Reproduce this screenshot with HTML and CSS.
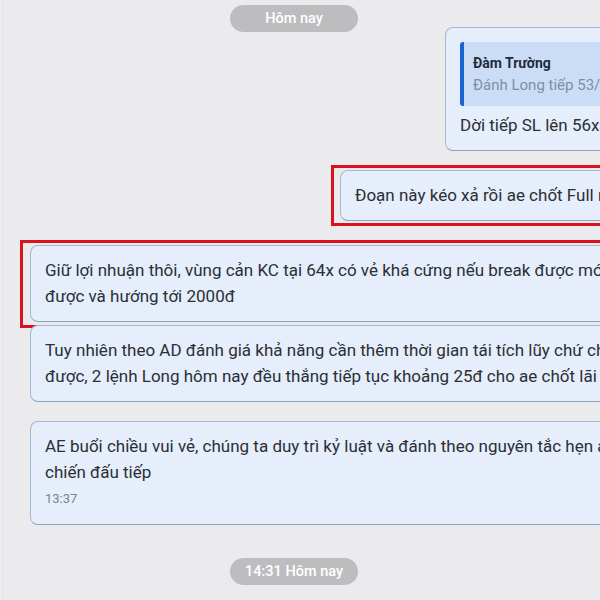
FILE: index.html
```html
<!DOCTYPE html>
<html lang="vi">
<head>
    <meta charset="UTF-8">
    <meta name="viewport" content="width=device-width, initial-scale=1.0">
    <title>Chat</title>
    <link rel="stylesheet" href="styles.css">
</head>
<body>
    <div class="chat">
        <div class="day-pill first">Hôm nay</div>

        <div class="msg out reply">
            <div class="quote">
                <div class="quote-name">Đàm Trường</div>
                <div class="quote-text">Đánh Long tiếp 53/55x SL 50x TP 60x</div>
            </div>
            <div class="text">Dời tiếp SL lên 56x</div>
        </div>

        <div class="msg out single marked">
            <div class="text">Đoạn này kéo xả rồi ae chốt Full nhé</div>
            <span class="mark mark-out"></span>
        </div>

        <div class="msg in wide marked">
            <div class="text">Giữ lợi nhuận thôi, vùng cản KC tại 64x có vẻ khá cứng nếu break được mới xem xét lên tiếp<br>được và hướng tới 2000đ</div>
            <span class="mark mark-in"></span>
        </div>

        <div class="msg in wide next">
            <div class="text">Tuy nhiên theo AD đánh giá khả năng cần thêm thời gian tái tích lũy chứ chưa vượt<br>được, 2 lệnh Long hôm nay đều thắng tiếp tục khoảng 25đ cho ae chốt lãi nhé</div>
        </div>

        <div class="msg in wide last">
            <div class="text">AE buổi chiều vui vẻ, chúng ta duy trì kỷ luật và đánh theo nguyên tắc hẹn ae tối<br>chiến đấu tiếp</div>
            <div class="time">13:37</div>
        </div>

        <div class="day-pill second">14:31 Hôm nay</div>
    </div>
</body>
</html>
```

FILE: styles.css
```css
body {
    margin: 0;
    width: 600px;
    height: 600px;
    overflow: hidden;
    background-color: #ebebed;
    font-family: Roboto, 'Noto Sans', sans-serif;
    color: #2b2f36;
}

.chat {
    display: flex;
    flex-direction: column;
    width: 588px;
    height: 600px;
    border-left: 1px solid #e2e2e6;
    margin-left: 3px;
    box-sizing: border-box;
}

.day-pill {
    align-self: center;
    min-width: 128px;
    height: 27px;
    box-sizing: border-box;
    padding: 0 12px;
    margin-right: 7px;
    border-radius: 14px;
    background-color: #bdbdc0;
    color: #ffffff;
    font-size: 14.5px;
    font-weight: 500;
    line-height: 27px;
    text-align: center;
}

.day-pill.first {
    margin-top: 5px;
}

.day-pill.second {
    margin-top: 33px;
}

.msg {
    position: relative;
    flex-shrink: 0;
    box-sizing: border-box;
    background-color: #e5eefa;
    border: 1px solid #a6b8cf;
    border-bottom-color: #8ea3bd;
    border-radius: 8px;
    padding: 11px 14px 12px;
    font-size: 17px;
    line-height: 26px;
    white-space: nowrap;
}

.msg.out {
    width: 400px;
}

.msg.in {
    width: 720px;
    margin-left: 26px;
}

.msg.reply {
    margin-top: -5px;
    margin-left: 441px;
    padding: 14px 14px 12px;
}

.msg.single {
    margin-top: 19px;
    margin-left: 336px;
}

.msg.wide {
    margin-top: 24px;
}

.msg.next {
    margin-top: 3px;
}

.msg.last {
    margin-top: 19px;
    padding-bottom: 15px;
}

.quote {
    border-left: 4px solid #1a63d3;
    border-radius: 3px;
    background-color: #cbddf5;
    padding: 10px 9px;
    margin-bottom: 6px;
}

.quote-name {
    font-size: 14px;
    font-weight: 700;
    color: #1d2b3d;
    line-height: 22px;
}

.quote-text {
    font-size: 15px;
    color: #7d8ea5;
    line-height: 22px;
}

.time {
    font-size: 13px;
    line-height: 20px;
    margin-top: 4px;
    color: #7a8390;
}

.mark {
    position: absolute;
    border: 3px solid #d8121e;
    pointer-events: none;
}

.mark-out {
    top: -6px;
    bottom: -6px;
    left: -10px;
    right: -20px;
}

.mark-in {
    top: -6px;
    bottom: -7px;
    left: -11px;
    right: -20px;
}
```
